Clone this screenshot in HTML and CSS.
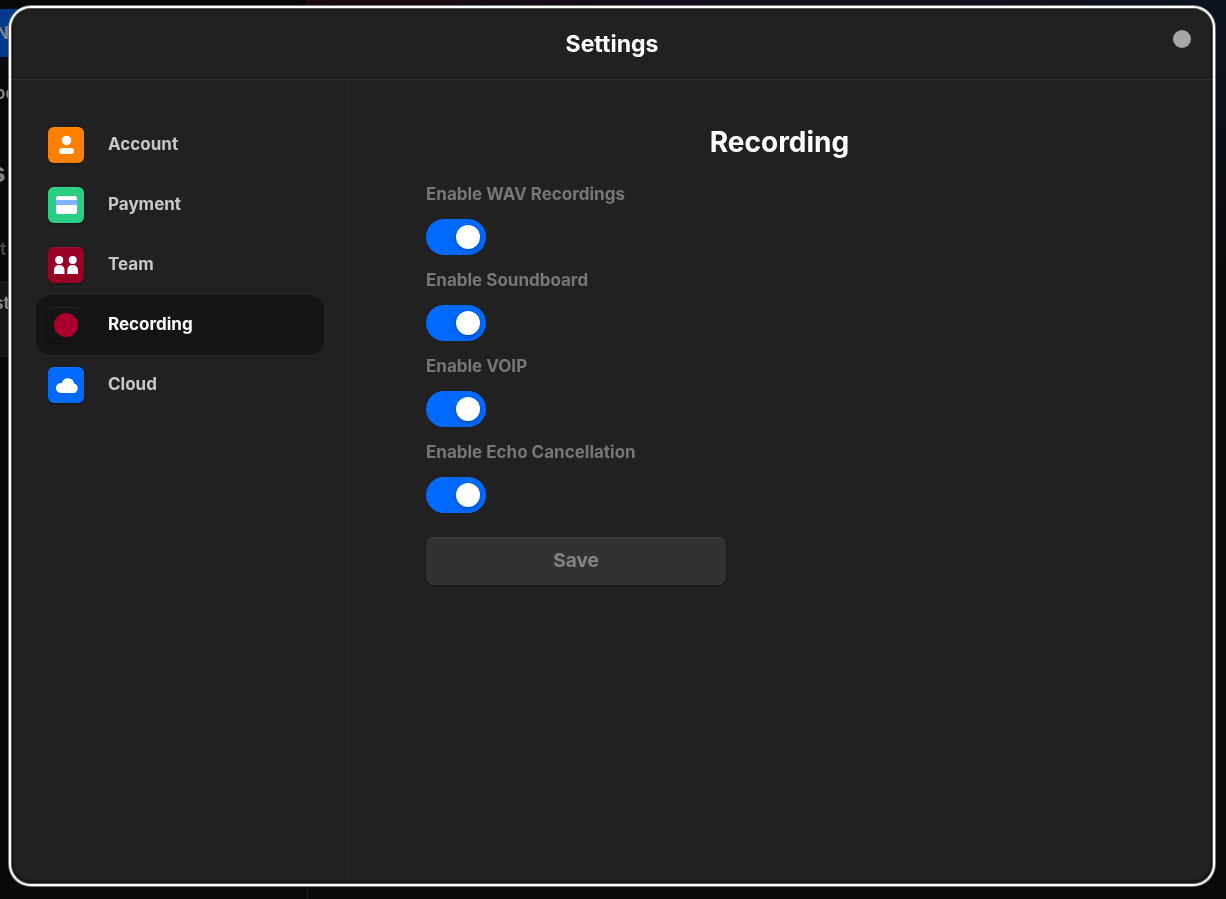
FILE: index.html
```html
<!DOCTYPE html>
<html lang="en">
<head>
<meta charset="utf-8">
<title>Settings</title>
<link rel="stylesheet" href="styles.css">
</head>
<body>
<div class="backdrop" aria-hidden="true">
  <div class="strip">
    <span class="strip-new">Ne</span>
    <span class="strip-nav">oo</span>
    <span class="strip-heading">s</span>
    <span class="strip-sub">t</span>
    <span class="strip-card">st</span>
  </div>
  <div class="stage"></div>
</div>
<section class="modal" role="dialog" aria-labelledby="title">
  <header class="modal-header">
    <h1 class="title" id="title">Settings</h1>
    <button class="close" type="button" aria-label="Close"></button>
  </header>
  <div class="modal-body">
    <nav class="sidebar">
      <a class="item" href="#account"><span class="tile tile-account"><svg viewBox="0 0 36 36"><circle cx="18.5" cy="13.5" r="4.7"/><rect x="11" y="21" width="15" height="6" rx="3"/></svg></span><span class="item-label">Account</span></a>
      <a class="item" href="#payment"><span class="tile tile-payment"><svg viewBox="0 0 36 36"><rect x="8" y="9" width="21" height="18" rx="2.5"/><path class="card-band" d="M8 13h21v5H8z"/></svg></span><span class="item-label">Payment</span></a>
      <a class="item" href="#team"><span class="tile tile-team"><svg viewBox="0 0 36 36"><circle cx="11.2" cy="13" r="4"/><circle cx="24.7" cy="13" r="4"/><path d="M6 27v-4a5 5 0 0 1 5-5h.5a5 5 0 0 1 5 5v4zM19.3 27v-4a5 5 0 0 1 5-5h.7a5 5 0 0 1 5 5v4z"/></svg></span><span class="item-label">Team</span></a>
      <a class="item active" href="#recording"><span class="tile tile-recording"><svg viewBox="0 0 36 36"><circle class="dot" cx="18" cy="18" r="12"/></svg></span><span class="item-label">Recording</span></a>
      <a class="item" href="#cloud"><span class="tile tile-cloud"><svg viewBox="0 0 36 36"><path d="M13 26a5 5 0 0 1-.2-10h1a6.3 6.3 0 0 1 12.3.4A4.9 4.9 0 0 1 24.2 26z"/></svg></span><span class="item-label">Cloud</span></a>
    </nav>
    <main class="content">
      <h2 class="heading">Recording</h2>
      <form class="form">
        <div class="field"><label for="wav">Enable WAV Recordings</label><input class="switch" id="wav" type="checkbox" role="switch" checked></div>
        <div class="field"><label for="soundboard">Enable Soundboard</label><input class="switch" id="soundboard" type="checkbox" role="switch" checked></div>
        <div class="field"><label for="voip">Enable VOIP</label><input class="switch" id="voip" type="checkbox" role="switch" checked></div>
        <div class="field"><label for="echo">Enable Echo Cancellation</label><input class="switch" id="echo" type="checkbox" role="switch" checked></div>
        <button class="save" type="button">Save</button>
      </form>
    </main>
  </div>
</section>
</body>
</html>
```
FILE: styles.css
```css
* { box-sizing: border-box; }
body {
  margin: 0;
  min-height: 100vh;
  display: flex;
  padding: 8px 13px 15px 11px;
  background: #090909;
  font-family: Inter, "Liberation Sans", sans-serif;
  font-weight: 700;
  font-size: 17px;
  color: #c8c8c8;
}
.backdrop {
  position: fixed;
  inset: 0;
  z-index: -1;
  display: grid;
  grid-template-columns: 307px 1fr;
}
.strip {
  display: flex;
  flex-direction: column;
  align-items: flex-start;
  padding-top: 9px;
  color: #858585;
}
.strip span { width: 24px; }
.strip .strip-new { background: #003a8c; line-height: 48px; text-indent: -4px; }
.strip .strip-nav { line-height: 72px; text-indent: -5px; }
.strip .strip-heading { line-height: 88px; font-size: 26px; text-indent: -9px; }
.strip .strip-sub { line-height: 64px; color: #444; }
.strip .strip-card { background: #151515; line-height: 44px; height: 76px; text-indent: -6px; }
.stage {
  border-left: 1px solid #1c1c1c;
  background: linear-gradient(180deg, transparent, #090909 300px),
    linear-gradient(90deg, #1a0a10, #150d1c 40%, #0d1320);
}
.modal {
  flex: 1;
  display: flex;
  flex-direction: column;
  border-radius: 20px;
  outline: 2px solid #fff;
  background: #212121;
  box-shadow: 0 0 0 3px #777, inset 0 0 0 1px #555, inset 0 -1px 2px 2px #111;
}
.modal-header {
  display: flex;
  align-items: center;
  justify-content: center;
  position: relative;
  height: 72px;
  margin: 0 1px;
  border-bottom: 1px solid #2d2d2d;
}
.title { margin: 0; font-size: 23px; color: #fff; }
.close {
  position: absolute;
  right: 21px;
  top: 22px;
  width: 18px;
  height: 18px;
  padding: 0;
  border: 0;
  border-radius: 50%;
  background: #a6a6a6;
}
.modal-body { flex: 1; display: flex; padding: 0 3px 3px; }
.sidebar {
  flex: 0 0 335px;
  padding: 35px 24px 24px 22px;
  border-right: 1px solid #2d2d2d;
}
.item {
  display: flex;
  align-items: center;
  gap: 24px;
  height: 60px;
  padding: 0 12px;
  border-radius: 16px;
  color: #c8c8c8;
  text-decoration: none;
}
.item-label { padding-bottom: 2px; }
.item.active { background: #141414; color: #fff; }
.tile {
  width: 36px;
  height: 36px;
  border-radius: 6px;
  box-shadow: 0 1px 2px #0006, inset 0 1px 1px #ffffff14;
}
.tile svg { display: block; fill: #fff; }
.tile-account { background: #ff8000; }
.tile-payment { background: #2acf85; }
.tile-payment .card-band { fill: #80b3ff; }
.tile-team { background: #990026; }
.tile-recording { background: #141414; }
.tile-recording .dot { fill: #ab002e; }
.tile-cloud { background: #006aff; }
.content { flex: 1; padding: 42px 77px; }
.heading { margin: 0; line-height: 40px; font-size: 28px; text-align: center; color: #fff; }
.form { display: flex; flex-direction: column; align-items: flex-start; padding-top: 20px; }
.field { display: flex; flex-direction: column; height: 86px; color: #777; }
.field label { line-height: 24px; margin-bottom: 13px; }
.switch {
  appearance: none;
  display: flex;
  align-items: center;
  justify-content: flex-end;
  width: 60px;
  height: 36px;
  margin: 0;
  padding: 6px;
  border-radius: 18px;
  background: #006aff;
}
.switch::before {
  content: "";
  width: 24px;
  height: 24px;
  border-radius: 50%;
  background: #fff;
  box-shadow: 0 2px 4px #0004;
}
.switch:not(:checked) { justify-content: flex-start; background: #444; }
.save {
  width: 300px;
  height: 48px;
  margin-top: 11px;
  border: 0;
  border-radius: 8px;
  background: #323232;
  box-shadow: 0 1px 2px #0006, inset 0 2px 1px #ffffff0a;
  font: 700 19px/24px Inter, "Liberation Sans", sans-serif;
  color: #858585;
}
```
